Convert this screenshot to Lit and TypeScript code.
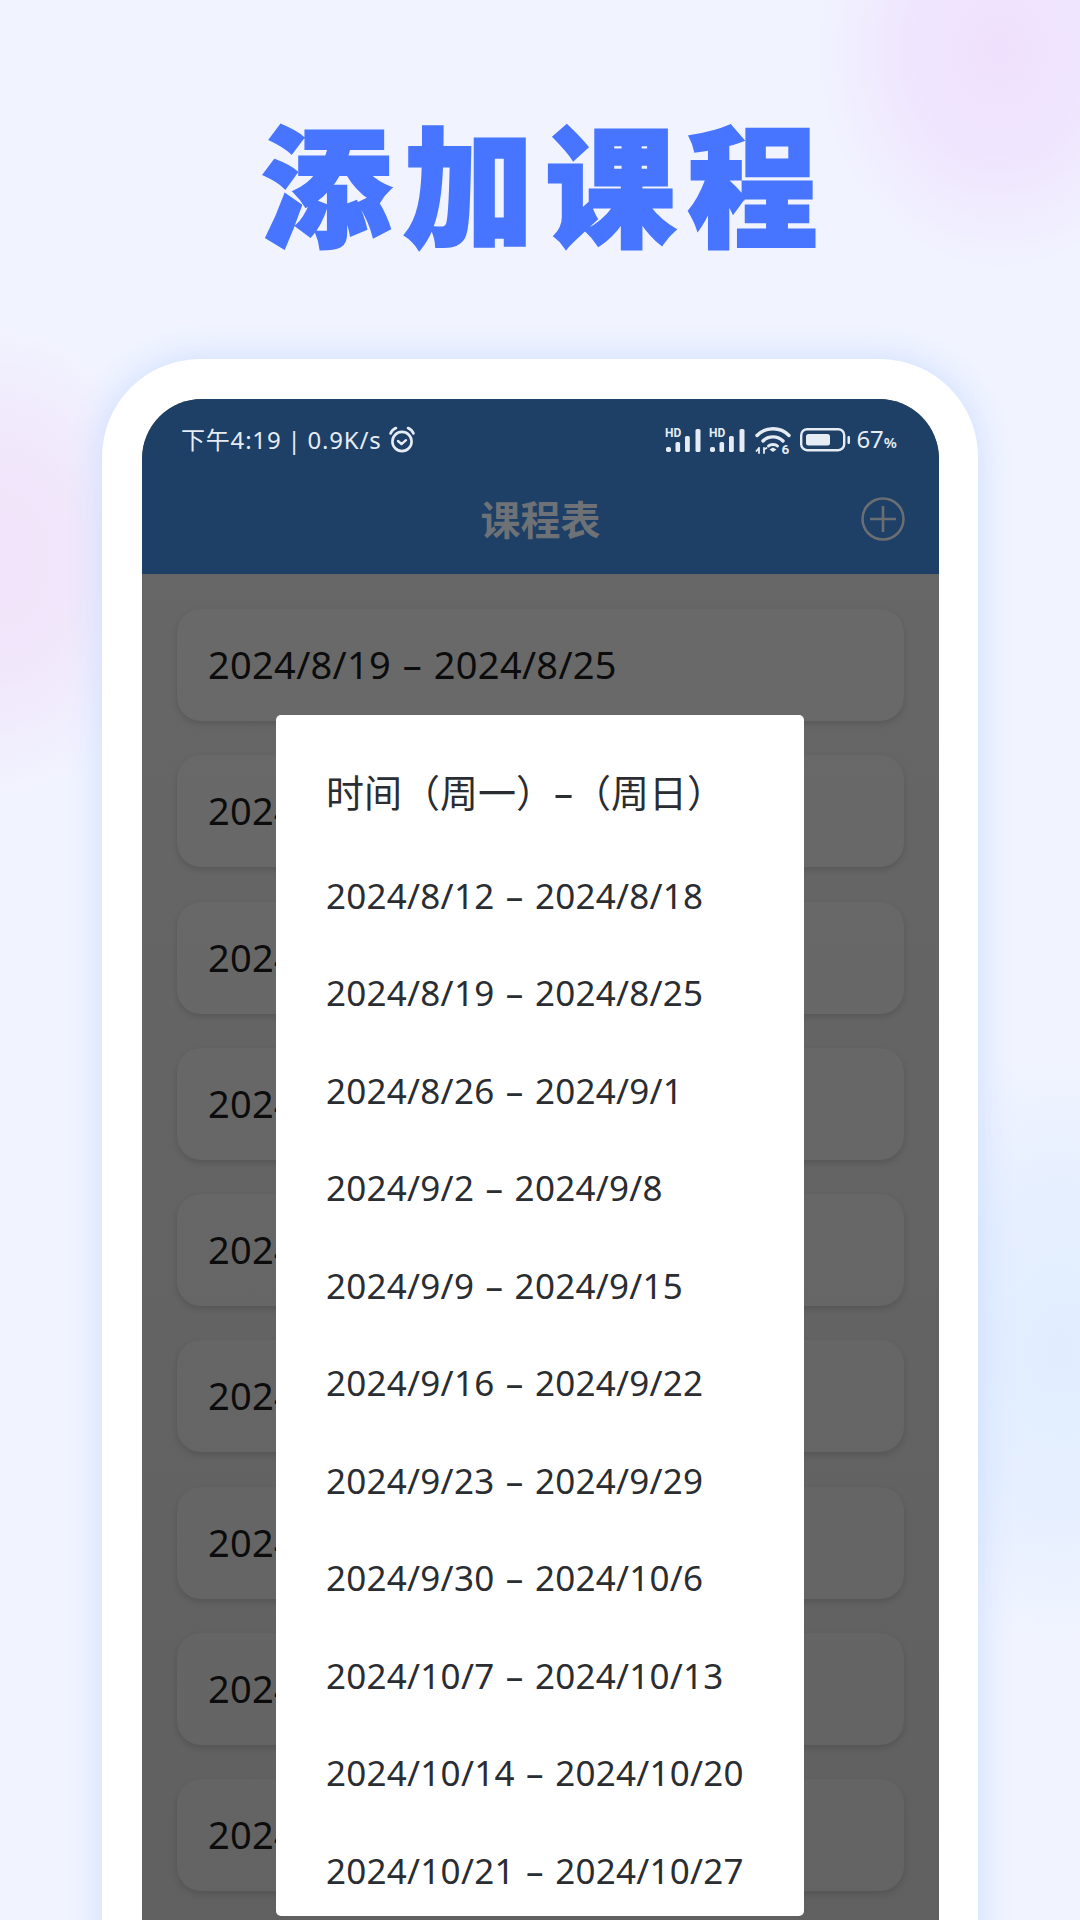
import { LitElement, html, css, svg } from "lit";
import { customElement } from "lit/decorators.js";

const weeks = [
  "2024/8/12 – 2024/8/18",
  "2024/8/19 – 2024/8/25",
  "2024/8/26 – 2024/9/1",
  "2024/9/2 – 2024/9/8",
  "2024/9/9 – 2024/9/15",
  "2024/9/16 – 2024/9/22",
  "2024/9/23 – 2024/9/29",
  "2024/9/30 – 2024/10/6",
  "2024/10/7 – 2024/10/13",
  "2024/10/14 – 2024/10/20",
  "2024/10/21 – 2024/10/27",
];

const signal = svg`<svg class="sig" width="36" height="27" viewBox="0 -3 36 27">
  <text x="0" y="8.5" font-family="Roboto, sans-serif" font-weight="700" font-size="12" fill="#e6ecf3">HD</text>
  <g fill="#e6ecf3">
    <rect x="1" y="19" width="5" height="5" rx="1.800"/>
    <rect x="10.500" y="14" width="4.600" height="10" rx="1.600"/>
    <rect x="20" y="8" width="4.800" height="16" rx="1.600"/>
    <rect x="30.500" y="1" width="5" height="23" rx="1.600"/>
  </g>
</svg>`;

@customElement("app-root")
export class AppRoot extends LitElement {
  static styles = css`
    :host {
      display: block;
      width: 1080px;
      height: 1920px;
      overflow: hidden;
      font-family: "Noto Sans", "Noto Sans CJK SC", sans-serif;
      background:
        radial-gradient(ellipse 190px 230px at 1000px 50px, #efe1fd 0%, #efe1fdcc 45%, #efe1fd00 100%),
        radial-gradient(ellipse 170px 240px at 0px 560px, #f1e3fa 0%, #f1e3fabb 50%, #f1e3fa00 100%),
        radial-gradient(ellipse 220px 300px at 1060px 1350px, #e1edff 0%, #e1edffbb 50%, #e1edff00 100%),
        #f1f4ff;
    }
    .page {
      display: flex;
      flex-direction: column;
      height: 1920px;
      overflow: hidden;
    }
    h1 {
      margin: 0;
      height: 359px;
      box-sizing: border-box;
      padding-top: 103px;
      text-align: center;
      text-indent: 11px;
      font-family: "Noto Sans CJK SC", sans-serif;
      font-size: 130px;
      line-height: 152px;
      font-weight: 900;
      letter-spacing: 12px;
      color: #4875ff;
      -webkit-text-stroke: 3px #4875ff;
      flex: none;
    }
    .frame {
      flex: none;
      box-sizing: border-box;
      width: 876px;
      height: 1700px;
      margin-left: 102px;
      padding: 40px;
      background: #fff;
      border-radius: 98px;
      box-shadow: 0 0 36px #cbdcff;
    }
    .screen {
      position: relative;
      width: 797px;
      height: 1620px;
      border-radius: 60px 60px 0 0;
      overflow: hidden;
      background: linear-gradient(#676767, #606060);
    }
    .head {
      height: 175px;
      background: #1e3f66;
      box-sizing: border-box;
      position: relative;
    }
    .status {
      display: flex;
      align-items: center;
      justify-content: space-between;
      height: 28px;
      padding: 27px 42px 0 39px;
      color: #e6ecf3;
    }
    .left, .right {
      display: flex;
      align-items: center;
    }
    .time {
      font-size: 24px;
      line-height: 28px;
      letter-spacing: 0.8px;
      word-spacing: -1px;
    }
    .alarm { margin-left: 6px; }
    .sig { margin: 0 8px 3px 0; display: block; }
    .wifi { margin: 4px 9px 0 2px; display: block; }
    .pct {
      font-size: 24px;
      line-height: 28px;
      margin-left: 6px;
    }
    .pct small { font-size: 15px; font-weight: 600; }
    .bar {
      display: flex;
      align-items: center;
      justify-content: center;
      height: 80px;
      margin-top: 24px;
      position: relative;
    }
    .bar h2 {
      margin: 0;
      font-size: 40px;
      line-height: 48px;
      font-weight: 700;
      color: #6e7175;
      font-family: "Noto Sans CJK SC", sans-serif;
    }
    .add {
      position: absolute;
      right: 34px;
      top: 19px;
    }
    .list {
      display: flex;
      flex-direction: column;
      gap: 34.3px;
      padding: 35px 35px 0 35px;
    }
    .card {
      flex: none;
      height: 112px;
      box-sizing: border-box;
      padding: 0 0 2px 31px;
      display: flex;
      align-items: center;
      border-radius: 24px;
      background: #ffffff05;
      box-shadow: 0 3px 6px #00000022;
      font-size: 38px;
      letter-spacing: 0.3px;
      word-spacing: 1.5px;
      color: #0c0c0c;
    }
    .dialog {
      position: absolute;
      left: 134px;
      top: 316px;
      width: 528px;
      height: 1201px;
      box-sizing: border-box;
      background: #fff;
      border-radius: 5px;
      overflow: hidden;
      padding: 47px 50px 0;
      color: #2a2d31;
    }
    .dialog h3 {
      margin: 0 0 25.5px;
      font-size: 38px;
      line-height: 60px;
      font-weight: 400;
      white-space: nowrap;
    }
    .row {
      height: 97.5px;
      box-sizing: border-box;
      padding-bottom: 2px;
      display: flex;
      align-items: center;
      font-size: 35px;
      letter-spacing: 0.25px;
      word-spacing: 2px;
      white-space: nowrap;
    }
  `;

  render() {
    return html`
      <div class="page">
        <h1>添加课程</h1>
        <div class="frame">
          <div class="screen">
            <div class="head">
              <div class="status">
                <div class="left">
                  <span class="time">下午4:19 | 0.9K/s</span>
                  <svg class="alarm" width="28" height="28" viewBox="0 0 28 28" fill="none" stroke="#e6ecf3" stroke-linecap="round" stroke-linejoin="round">
                    <circle cx="14" cy="15.5" r="9.6" stroke-width="2.6"/>
                    <path d="M10 15l3.500 3.200 4.500-4" stroke-width="2.400"/>
                    <path d="M2.500 7.500C3.500 4.800 5.500 3 8 2M25.500 7.500C24.500 4.800 22.500 3 20 2" stroke-width="2.600"/>
                  </svg>
                </div>
                <div class="right">
                  ${signal}${signal}
                  <svg class="wifi" width="36" height="32" viewBox="0 0 36 32" fill="none" stroke="#e6ecf3" stroke-linecap="round">
                    <path d="M2 9.500C10.500 .5 25.500 .5 34 9.500" stroke-width="3.400"/>
                    <path d="M8 15C13 9.500 23 9.500 28 15" stroke-width="3.400"/>
                    <path d="M13.500 20C15.500 18 20.500 18 22.500 20" stroke-width="3"/>
                    <path d="M14.500 23.500L18 21.500L21.500 23.500L18 26Z" fill="#e6ecf3" stroke="none"/>
                    <path d="M4 22v5M1.500 25l2.500-3M9 22v5M9 23.500l2.500-1.500" stroke-width="1.800"/>
                    <text x="26.500" y="28" font-family="Roboto, sans-serif" font-weight="700" font-size="13.500" fill="#e6ecf3" stroke="none">6</text>
                  </svg>
                  <svg width="50" height="24" viewBox="0 0 50 24" fill="none">
                    <rect x="1.200" y="1.200" width="43" height="21" rx="6" stroke="#e6ecf3" stroke-width="2.400"/>
                    <rect x="6" y="6" width="24" height="11.500" rx="2.500" fill="#e6ecf3"/>
                    <rect x="47.500" y="8" width="2.500" height="8" rx="1.200" fill="#e6ecf3"/>
                  </svg>
                  <span class="pct">67<small>%</small></span>
                </div>
              </div>
              <div class="bar">
                <h2>课程表</h2>
                <svg class="add" width="44" height="44" viewBox="0 0 44 44" fill="none" stroke="#6a6e73" stroke-width="2.600">
                  <circle cx="22" cy="22" r="20.500"/>
                  <path d="M22 9v26M9 22h26"/>
                </svg>
              </div>
            </div>
            <div class="list">
              ${weeks.slice(1, 10).map((w) => html`<div class="card">${w}</div>`)}
            </div>
            <div class="dialog">
              <h3>时间（周一）–（周日）</h3>
              ${weeks.map((w) => html`<div class="row">${w}</div>`)}
            </div>
          </div>
        </div>
      </div>
    `;
  }
}
